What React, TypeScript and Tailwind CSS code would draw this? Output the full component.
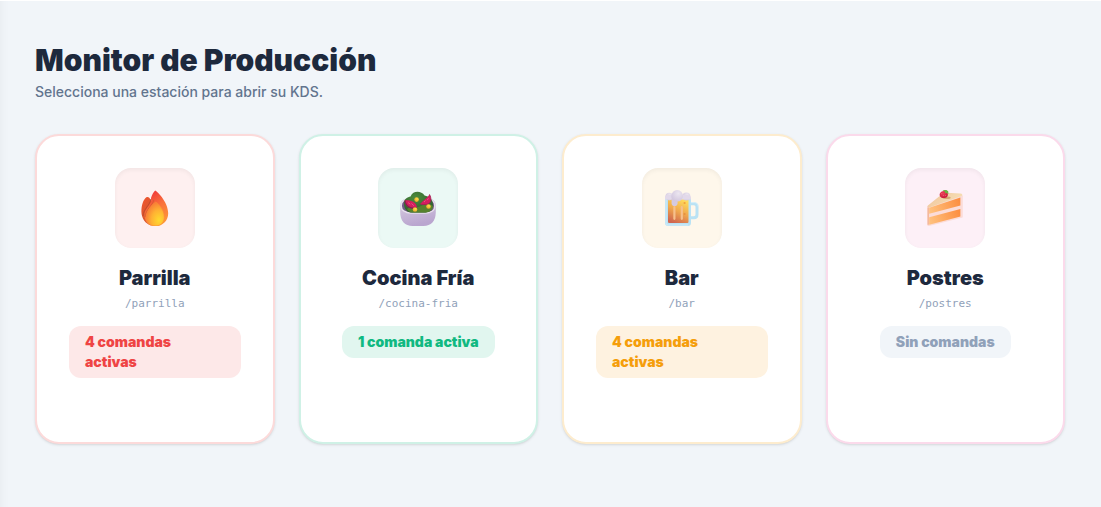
import type { ReactNode } from "react";

const FireIcon = () => (
  <svg width="36" height="36" viewBox="0 0 36 36" aria-hidden="true">
    <defs>
      <linearGradient id="fire-back" x1="0" y1="0" x2="1" y2="1">
        <stop offset="0" stopColor="#f2552f" />
        <stop offset="0.5" stopColor="#d9562e" />
        <stop offset="1" stopColor="#f07a30" />
      </linearGradient>
      <linearGradient id="fire-main" x1="0.3" y1="0" x2="0.7" y2="1">
        <stop offset="0" stopColor="#f0353b" />
        <stop offset="0.45" stopColor="#f9703a" />
        <stop offset="1" stopColor="#ff9a3a" />
      </linearGradient>
      <radialGradient id="fire-core" cx="0.7" cy="0.75" r="0.75">
        <stop offset="0" stopColor="#ffd92f" />
        <stop offset="0.55" stopColor="#ffb133" />
        <stop offset="1" stopColor="#f77e36" />
      </radialGradient>
    </defs>
    <path
      d="M9.8 7C11.5 6.6 13 8 13.4 10L22 30L14 35.5C8.5 34 4.4 28 4.4 21.5C4.4 15.5 6 9.5 9.8 7Z"
      fill="url(#fire-back)"
    />
    <path
      d="M18.2 0.5C19.4 0.8 31.2 11.5 31.2 23.2C31.2 31 25.5 36 18.6 36C11.5 36 7.5 31 7.5 25.5C7.5 17.5 15.5 14.5 14 8C14.8 5 16.8 1.8 18.2 0.5Z"
      fill="url(#fire-main)"
    />
    <path
      d="M13.8 9C13.5 15 6.4 18.5 6 26"
      fill="none"
      stroke="#b94a2c"
      strokeWidth="0.9"
    />
    <path
      d="M16.8 10C15.5 16 8.6 19 8 27"
      fill="none"
      stroke="#d35b2e"
      strokeWidth="0.8"
    />
    <path
      d="M18.8 12C20.5 13 27.3 19 27.3 27.2C27.3 32.6 23.5 36 18.4 36C13 36 9.4 32.5 9.4 27.4C9.4 20.5 15.5 14 18.8 12Z"
      fill="url(#fire-core)"
      stroke="#fb8d36"
      strokeWidth="0.6"
    />
  </svg>
);

const SaladIcon = () => (
  <svg width="36" height="36" viewBox="0 0 36 36" aria-hidden="true">
    <defs>
      <linearGradient id="bowl" x1="0" y1="0" x2="0.3" y2="1">
        <stop offset="0" stopColor="#d9d0e2" />
        <stop offset="1" stopColor="#baa6cf" />
      </linearGradient>
      <radialGradient id="leaf" cx="0.4" cy="0.3" r="0.8">
        <stop offset="0" stopColor="#4c8d3b" />
        <stop offset="1" stopColor="#2c572e" />
      </radialGradient>
      <radialGradient id="corn" cx="0.6" cy="0.35" r="0.7">
        <stop offset="0" stopColor="#ffe14a" />
        <stop offset="1" stopColor="#e7a129" />
      </radialGradient>
    </defs>
    <path
      d="M0.2 16C0.2 10.5 3.5 8.8 8 8.8H28C32.5 8.8 35.8 10.5 35.8 16V22C35.8 31 31 36 23.5 36H12.5C5 36 0.2 31 0.2 22Z"
      fill="url(#bowl)"
    />
    <path
      d="M1.2 16C1.2 11.2 4 9.8 8 9.8H28C32 9.8 34.8 11.2 34.8 16C34.8 20.5 30.5 23 25 23H11C5.5 23 1.2 20.5 1.2 16Z"
      fill="#705986"
      stroke="#e6dfec"
      strokeWidth="1.5"
    />
    <path
      d="M4 13C4 9 7.5 7 10.5 6.5C12 3.2 14.5 1.8 17.5 1.8C20 1.8 23 3 24.5 5.6C29 6.5 33 9.5 33 15C33 20 29 22.6 24 22.6H12C7 22.6 3.8 19 4 13Z"
      fill="url(#leaf)"
    />
    <path
      d="M7 19C12 15 17 18.5 21 16C25 13.5 31 14 33 16C33 20.3 29 22.6 24 22.6H12.5C10 22.6 8 21 7 19Z"
      fill="#56822d"
    />
    <path
      d="M5 10.5C9.5 9.5 16.5 12 17 17.5C11.5 19.5 5.5 16.8 5 10.5Z"
      fill="#d51d5e"
    />
    <path
      d="M5 10.5C5.5 16.8 11.5 19.5 17 17.5"
      fill="none"
      stroke="#8b1d50"
      strokeWidth="1.4"
    />
    <path d="M8.2 12.7L10.3 14.2M11.5 13.5L13.8 15.7" stroke="#e8648f" strokeWidth="0.8" />
    <path
      d="M29.5 4.4C31.5 8 31.5 12.5 28 14C25.5 15 22.5 14.5 20.2 14C22.5 10.5 27 8.5 29.5 4.4Z"
      fill="#d51d5e"
    />
    <path
      d="M29.5 4.4C31.5 8 31.5 12.5 28 14C25.5 15 22.5 14.5 20.2 14"
      fill="none"
      stroke="#a81d55"
      strokeWidth="0.9"
    />
    <path d="M28.5 8.2L27.2 10.2M25.5 10.5L24 12" stroke="#e8648f" strokeWidth="0.8" />
    <circle cx="16.6" cy="9.6" r="2.3" fill="url(#corn)" />
    <circle cx="15" cy="19.5" r="2.3" fill="url(#corn)" />
    <circle cx="28.5" cy="16.5" r="2.3" fill="url(#corn)" />
  </svg>
);

const BeerIcon = () => (
  <svg width="36" height="36" viewBox="0 0 36 36" aria-hidden="true">
    <defs>
      <linearGradient id="beer" x1="0.7" y1="0" x2="0.3" y2="1">
        <stop offset="0" stopColor="#ffdc5c" />
        <stop offset="0.5" stopColor="#f0a94e" />
        <stop offset="1" stopColor="#cf6550" />
      </linearGradient>
      <radialGradient id="foam" cx="0.6" cy="0.3" r="0.8">
        <stop offset="0" stopColor="#ece6f0" />
        <stop offset="1" stopColor="#cfc3dc" />
      </radialGradient>
    </defs>
    <path
      d="M26.5 13.7H30C32 13.7 33 14.8 33 16.8V24.5C33 26.5 32 27.8 30 27.8H26.5"
      fill="none"
      stroke="#b9e2f4"
      strokeWidth="3"
    />
    <path
      d="M26.5 12.6H30.5C32.8 12.6 34.1 14 34.1 16.5"
      fill="none"
      stroke="#d8f0fa"
      strokeWidth="0.8"
    />
    <path d="M1 8H27V33C27 34.8 25.8 36 24 36H4C2.2 36 1 34.8 1 33Z" fill="#b9e2f4" />
    <path d="M2 9V32.8C2 34.3 2.8 35 4.2 35H24" fill="none" stroke="#d9f0fa" strokeWidth="0.8" />
    <path d="M4 9H24.5V31.5C24.5 32.5 24 33 23 33H5.5C4.5 33 4 32.5 4 31.5Z" fill="url(#beer)" />
    <path d="M10.4 17V28.8M17.8 17V28.8" stroke="#f6c08c" strokeWidth="2.2" strokeLinecap="round" />
    <circle cx="20.6" cy="13" r="1.1" fill="#f2a03c" />
    <circle cx="20.6" cy="24" r="1.1" fill="#e8913f" />
    <circle cx="5.2" cy="6.6" r="3.8" fill="url(#foam)" />
    <circle cx="22.4" cy="6.6" r="4" fill="url(#foam)" />
    <path d="M1 9.4V7C1 6 2 5 4 5H23C25.5 5 27 6.5 27 8V9.4Z" fill="#e2d9ea" />
    <path d="M7.6 6H13.6V13.2C13.6 17 7.6 17 7.6 13.2Z" fill="#d5cae1" />
    <circle cx="13.2" cy="5.8" r="5.8" fill="url(#foam)" />
  </svg>
);

const CakeIcon = () => (
  <svg width="36" height="36" viewBox="0 0 36 36" aria-hidden="true">
    <defs>
      <linearGradient id="sponge" x1="0" y1="0.6" x2="1" y2="0.4">
        <stop offset="0" stopColor="#ffc07c" />
        <stop offset="1" stopColor="#fc8f42" />
      </linearGradient>
      <linearGradient id="icing" x1="0" y1="0" x2="1" y2="0.4">
        <stop offset="0" stopColor="#f0c49c" />
        <stop offset="1" stopColor="#f6dfb4" />
      </linearGradient>
      <radialGradient id="berry" cx="0.4" cy="0.35" r="0.7">
        <stop offset="0" stopColor="#ee4059" />
        <stop offset="1" stopColor="#c5183a" />
      </radialGradient>
    </defs>
    <path
      d="M0.3 16.3L34.8 5.2C35.5 5 35.8 5.5 35.8 6.2V26.4C35.8 27.2 35.4 27.6 34.7 27.8L2 35.9C1 36.1 0.3 35.6 0.3 34.7Z"
      fill="#fbdcd8"
    />
    <path
      d="M0.9 15.4L15.5 3.8C16.8 2.9 18 2.7 19.5 2.8L33.4 3.5C35.3 3.6 36 5.2 34.7 6L2.2 17.4C0.5 17.8 0 16.4 0.9 15.4Z"
      fill="url(#icing)"
    />
    <path d="M2.2 17.8L33.4 7.6V15.4L2.2 23.8Z" fill="url(#sponge)" />
    <path d="M2.2 27.2L33.4 19V26.6L2.2 34.8Z" fill="url(#sponge)" />
    <path d="M1.2 17.6V34.8" stroke="#f3b596" strokeWidth="1.4" />
    <ellipse cx="19.5" cy="7.8" rx="4.2" ry="1.2" fill="#d6a873" />
    <path
      d="M13 3.2C14.5 0.8 18 0.2 20 2.2C21.8 4.2 20.8 7 18.6 7.8C16.5 8.5 13.8 7.8 13 6.2C12.6 5.2 12.5 4 13 3.2Z"
      fill="url(#berry)"
    />
    <path
      d="M15.5 0.4L17.5 0L19.4 0L21.2 1.2L21.4 4L19.6 3.1L18.4 3.4L18 1.8Z"
      fill="#6bb544"
    />
    <path d="M14.6 3.4V4.2M16.4 5V5.8M18.4 5.2V6" stroke="#f5a08e" strokeWidth="0.6" />
  </svg>
);

type Station = {
  name: string;
  slug: string;
  status: string;
  icon: ReactNode;
  border: string;
  tile: string;
  badge: string;
};

const stations: Station[] = [
  {
    name: "Parrilla",
    slug: "/parrilla",
    status: "4 comandas activas",
    icon: <FireIcon />,
    border: "border-[#fcdada]",
    tile: "bg-[#fef0f0]",
    badge: "bg-[#fde8e8] text-[#ef4444]",
  },
  {
    name: "Cocina Fría",
    slug: "/cocina-fria",
    status: "1 comanda activa",
    icon: <SaladIcon />,
    border: "border-[#cff1e6]",
    tile: "bg-[#ebf9f5]",
    badge: "bg-[#e1f6ef] text-[#10b981]",
  },
  {
    name: "Bar",
    slug: "/bar",
    status: "4 comandas activas",
    icon: <BeerIcon />,
    border: "border-[#fdecce]",
    tile: "bg-[#fef7eb]",
    badge: "bg-[#fef2e0] text-[#f59e0b]",
  },
  {
    name: "Postres",
    slug: "/postres",
    status: "Sin comandas",
    icon: <CakeIcon />,
    border: "border-[#fbdaeb]",
    tile: "bg-[#fdf0f7]",
    badge: "bg-slate-100 text-slate-400",
  },
];

const StationCard = ({ station }: { station: Station }) => {
  return (
    <a
      href={station.slug}
      className={`flex flex-col items-center rounded-3xl border-2 bg-white px-8 pt-8 pb-16 shadow-sm ${station.border}`}
    >
      <div
        className={`flex h-20 w-20 items-center justify-center rounded-2xl inset-shadow-sm ${station.tile}`}
      >
        {station.icon}
      </div>
      <h2 className="mt-4 text-xl font-black text-slate-800">{station.name}</h2>
      <p className="mt-1 font-['DejaVu_Sans_Mono',monospace] text-[11px] leading-4 text-slate-400">
        {station.slug}
      </p>
      <span
        className={`mt-3.5 rounded-xl px-4 py-1.5 text-sm font-black ${station.badge}`}
      >
        {station.status}
      </span>
    </a>
  );
};

export default function App() {
  return (
    <main className="min-h-screen border-t border-white bg-slate-100 pt-[41px] pr-9 pb-16 pl-[35px] font-['Inter',sans-serif] shadow-[inset_12px_0_12px_-12px_rgba(0,0,0,0.05)]">
      <header>
        <h1 className="text-3xl font-black text-slate-800">
          Monitor de Producción
        </h1>
        <p className="mt-1 text-sm font-medium text-slate-500">
          Selecciona una estación para abrir su KDS.
        </p>
      </header>
      <section className="mt-8 grid grid-cols-2 gap-6 md:grid-cols-4">
        {stations.map((station) => (
          <StationCard key={station.slug} station={station} />
        ))}
      </section>
    </main>
  );
}
